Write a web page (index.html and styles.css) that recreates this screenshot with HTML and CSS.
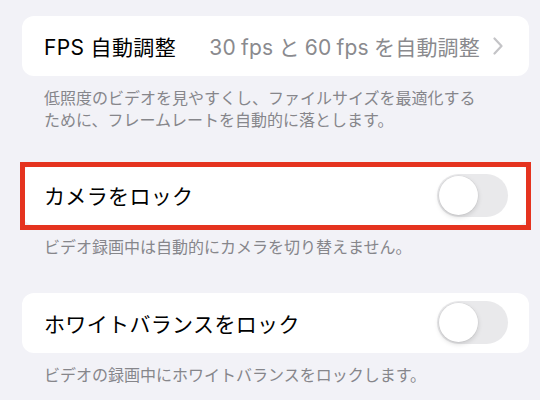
FILE: index.html
```html
<!DOCTYPE html>
<html lang="ja">
<head>
<meta charset="utf-8">
<link rel="stylesheet" href="styles.css">
</head>
<body>
<main class="page">
  <section class="group">
    <div class="card">
      <span class="label">FPS 自動調整</span>
      <span class="value">30 fps と 60 fps を自動調整</span>
      <svg class="chevron" width="10" height="18" viewBox="0 0 10 18"><path d="M1.5 1.5 L8.5 9 L1.5 16.5" fill="none" stroke="#c4c4c7" stroke-width="2.2" stroke-linecap="round" stroke-linejoin="round"/></svg>
    </div>
    <p class="note">低照度のビデオを見やすくし、ファイルサイズを最適化する<br>ために、フレームレートを自動的に落とします。</p>
  </section>
  <section class="group">
    <div class="card highlight">
      <span class="label">カメラをロック</span>
      <span class="toggle"><span class="knob"></span></span>
    </div>
    <p class="note">ビデオ録画中は自動的にカメラを切り替えません。</p>
  </section>
  <section class="group">
    <div class="card">
      <span class="label">ホワイトバランスをロック</span>
      <span class="toggle"><span class="knob"></span></span>
    </div>
    <p class="note">ビデオの録画中にホワイトバランスをロックします。</p>
  </section>
</main>
</body>
</html>
```
FILE: styles.css
```css
html, body {
  margin: 0;
  padding: 0;
  background: #f2f2f7;
}
body {
  font-family: "Inter", "Noto Sans CJK JP", sans-serif;
  color: #000;
}
.page {
  padding: 16px 11px 0 22px;
  display: flex;
  flex-direction: column;
  gap: 34px;
}
.group {
  display: flex;
  flex-direction: column;
}
.card {
  background: #fff;
  border-radius: 12px;
  height: 60px;
  display: flex;
  align-items: center;
  padding: 0 21px 0 22px;
  box-sizing: border-box;
}
.highlight {
  position: relative;
}
.highlight::after {
  content: "";
  position: absolute;
  top: -3px;
  bottom: -5px;
  left: -2px;
  right: -2px;
  border: 5px solid #e5331f;
}
.label {
  font-size: 21px;
  letter-spacing: 0.35px;
  flex: 1;
  white-space: nowrap;
}
.value {
  font-size: 21px;
  color: #8a8a8e;
  white-space: nowrap;
  word-spacing: -1px;
  letter-spacing: 0.2px;
}
.chevron {
  margin-left: 13px;
  margin-right: 5px;
}
.note {
  margin: 0;
  padding: 12px 22px 0 22px;
  font-size: 16px;
  line-height: 21.5px;
  color: #86868b;
  white-space: nowrap;
}
.toggle {
  width: 71px;
  height: 43px;
  border-radius: 22px;
  background: #e9e9eb;
  display: flex;
  align-items: center;
  padding: 2px;
  box-sizing: border-box;
}
.knob {
  width: 39px;
  height: 39px;
  border-radius: 50%;
  background: #fff;
  box-shadow: 0 2px 5px rgba(0,0,0,0.15), 0 0 0 0.5px rgba(0,0,0,0.06);
}
```
